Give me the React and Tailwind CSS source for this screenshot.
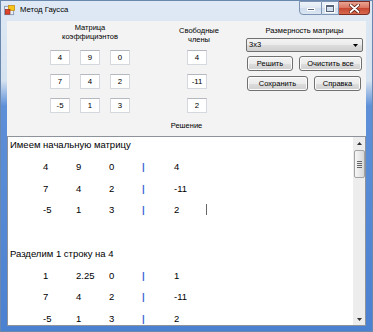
import React from "react";

const first = [
  ["4", "9", "0", "4"],
  ["7", "4", "2", "-11"],
  ["-5", "1", "3", "2"],
];
const second = [
  ["1", "2.25", "0", "1"],
  ["7", "4", "2", "-11"],
  ["-5", "1", "3", "2"],
];

function MRow({ vals, caret, className = "" }) {
  return (
    <div className={"flex h-[10.9px] leading-[10.9px] pl-[33px] " + className}>
      <span className="w-[33px] shrink-0">{vals[0]}</span>
      <span className="w-[33px] shrink-0">{vals[1]}</span>
      <span className="w-[33px] shrink-0">{vals[2]}</span>
      <span className="w-[32px] shrink-0 text-[#3a62d6] font-bold">|</span>
      <span className="w-[32px] shrink-0">{vals[3]}</span>
      {caret && <span className="w-[1px] h-[11px] mt-[-1px] bg-[#666] shrink-0" />}
    </div>
  );
}

function Box({ v }) {
  return (
    <div className="w-[20px] h-[15px] bg-white border border-[#d5d9df] border-t-[#b4b8bf] flex items-center justify-center text-[7.8px] leading-none text-black">
      {v}
    </div>
  );
}

function Btn({ w, children }) {
  return (
    <div
      className={
        "h-[15px] rounded-[3px] border border-[#707070] bg-[linear-gradient(180deg,#f4f4f4_0%,#ebebeb_50%,#dddddd_51%,#cfcfcf_100%)] shadow-[inset_0_0_0_1px_#fbfbfb] flex items-center justify-center text-[7.5px] leading-none text-black " +
        w
      }
    >
      {children}
    </div>
  );
}

export default function App() {
  return (
    <div className="w-[373px] h-[332px] overflow-hidden border border-[#6a87ad] bg-[linear-gradient(180deg,#dfe9f5_0px,#d5e2f0_80px,#5e90d8_105px,#4b81d1_100%)] flex flex-col font-['Liberation_Sans',Arial,sans-serif] text-black">
      {/* title bar */}
      <div className="h-[20px] flex items-start shrink-0">
        <svg className="ml-[3px] mt-[4px]" width="11" height="11" viewBox="0 0 12 12">
          <rect x="0.5" y="1.5" width="10" height="9" fill="#e9eef6" stroke="#8a9bb8" />
          <rect x="5" y="0.5" width="6.5" height="5.5" fill="#f5c517" stroke="#c48a10" strokeWidth="0.8" />
          <rect x="1.5" y="5" width="5" height="5" fill="#e0452b" stroke="#9c2a18" strokeWidth="0.8" />
        </svg>
        <span className="ml-[5px] mt-[4px] text-[7.7px] leading-[9px] text-black">Метод Гаусса</span>
        <div className="ml-auto mr-[2px] flex h-[14px]">
          <div className="w-[23px] h-full border border-[#7d93b3] rounded-bl-[4px] bg-[linear-gradient(180deg,#eef3f9_0%,#dfe8f3_50%,#cfdcec_51%,#dbe6f2_100%)] flex items-end justify-center pb-[3px]">
            <div className="w-[8px] h-[3px] bg-[#56657a] border border-white" />
          </div>
          <div className="w-[17px] h-full border-y border-r border-[#7d93b3] bg-[linear-gradient(180deg,#eef3f9_0%,#dfe8f3_50%,#cfdcec_51%,#dbe6f2_100%)] flex items-center justify-center">
            <div className="w-[8px] h-[7px] border border-[#56657a] border-t-2 outline outline-1 outline-white" />
          </div>
          <div className="w-[31px] h-full border-y border-r border-[#7c2c22] rounded-br-[4px] bg-[linear-gradient(180deg,#eaa593_0%,#d9735f_50%,#c74530_51%,#d66a4f_100%)] flex items-center justify-center">
            <svg width="11" height="9" viewBox="0 0 11 9">
              <path d="M1.5 1 L9.5 8 M9.5 1 L1.5 8" stroke="#5a1c14" strokeWidth="3.4" strokeLinecap="round" />
              <path d="M1.5 1 L9.5 8 M9.5 1 L1.5 8" stroke="#ffffff" strokeWidth="1.8" strokeLinecap="round" />
            </svg>
          </div>
        </div>
      </div>

      <div className="flex h-[305px] shrink-0">
        <div className="w-[6px] shrink-0" />
        {/* client */}
        <div className="w-[359px] shrink-0 bg-[#f3f3f3] flex flex-col">
          <div className="h-[115px] shrink-0 flex flex-col">
            <div className="flex h-[92px] shrink-0">
              {/* matrix */}
              <div className="ml-[43px] w-[80px] flex flex-col items-center pt-[2px]">
                <div className="text-[7.5px] leading-[9px] text-center">
                  Матрица
                  <br />
                  коэффициэнтов
                </div>
                <div className="mt-[9px] grid grid-cols-3 gap-x-[10px] gap-y-[9px]">
                  {first.map((r, i) =>
                    r.slice(0, 3).map((v, j) => <Box key={i + "-" + j} v={v} />)
                  )}
                </div>
              </div>
              {/* free terms */}
              <div className="ml-[49px] w-[40px] flex flex-col items-center pt-[5px]">
                <div className="text-[7.5px] leading-[9px] text-center">
                  Свободные
                  <br />
                  члены
                </div>
                <div className="mt-[6px] flex flex-col gap-y-[9px] ml-[-4px]">
                  {first.map((r, i) => (
                    <Box key={i} v={r[3]} />
                  ))}
                </div>
              </div>
              {/* controls */}
              <div className="ml-[27px] w-[117px] flex flex-col pt-[5px]">
                <div className="text-[7.5px] leading-[9px] text-center">Размерность матрицы</div>
                <div className="mt-[3px] h-[14px] rounded-[2px] border border-[#707070] bg-[linear-gradient(180deg,#f4f4f4_0%,#ebebeb_50%,#dddddd_51%,#cfcfcf_100%)] flex items-center pl-[2px] pr-[4px] text-[7.5px] leading-none">
                  <span>3x3</span>
                  <svg className="ml-auto" width="5" height="3" viewBox="0 0 5 3">
                    <path d="M0 0 L5 0 L2.5 3 Z" fill="#000" />
                  </svg>
                </div>
                <div className="mt-[4px] flex ml-[1px] gap-[6px]">
                  <Btn w="w-[46px]">Решить</Btn>
                  <Btn w="w-[63px]">Очистить все</Btn>
                </div>
                <div className="mt-[5px] flex ml-[1px] gap-[6px]">
                  <Btn w="w-[61px]">Сохранить</Btn>
                  <Btn w="w-[47px]">Справка</Btn>
                </div>
              </div>
            </div>
            <div className="mt-[8px] text-[7.5px] leading-[9px] text-center">Решение</div>
          </div>
          {/* rich text box */}
          <div className="flex-1 border border-[#8e939b] bg-white flex">
            <div className="flex-1 pt-[3px] pl-[2px] text-[9.5px] text-black flex flex-col">
              <div className="h-[10.9px] leading-[10.9px]">Имеем начальную матрицу</div>
              <MRow vals={first[0]} className="mt-[10.9px]" />
              <MRow vals={first[1]} className="mt-[10.9px]" />
              <MRow vals={first[2]} caret className="mt-[10.9px]" />
              <div className="mt-[32.7px] h-[10.9px] leading-[10.9px]">Разделим 1 строку на 4</div>
              <MRow vals={second[0]} className="mt-[10.9px]" />
              <MRow vals={second[1]} className="mt-[10.9px]" />
              <MRow vals={second[2]} className="mt-[10.9px]" />
            </div>
            {/* scrollbar */}
            <div className="w-[12px] bg-[#ededed] flex flex-col items-center">
              <div className="h-[12px] flex items-center justify-center">
                <svg width="5" height="3" viewBox="0 0 5 3">
                  <path d="M0 3 L5 3 L2.5 0 Z" fill="#333" />
                </svg>
              </div>
              <div className="mt-[1px] w-[11px] h-[28px] rounded-[2px] border border-[#a3a3a3] bg-[linear-gradient(90deg,#f6f6f6_0%,#e9e9e9_50%,#d9d9d9_100%)] flex flex-col items-center justify-center gap-[1px]">
                <div className="w-[5px] h-[1px] bg-[#666]" />
                <div className="w-[5px] h-[1px] bg-[#666]" />
                <div className="w-[5px] h-[1px] bg-[#666]" />
                <div className="w-[5px] h-[1px] bg-[#666]" />
              </div>
              <div className="flex-1" />
              <div className="h-[12px] flex items-center justify-center">
                <svg width="5" height="3" viewBox="0 0 5 3">
                  <path d="M0 0 L5 0 L2.5 3 Z" fill="#333" />
                </svg>
              </div>
            </div>
          </div>
        </div>
        <div className="w-[6px] shrink-0" />
      </div>
      <div className="flex-1" />
    </div>
  );
}
